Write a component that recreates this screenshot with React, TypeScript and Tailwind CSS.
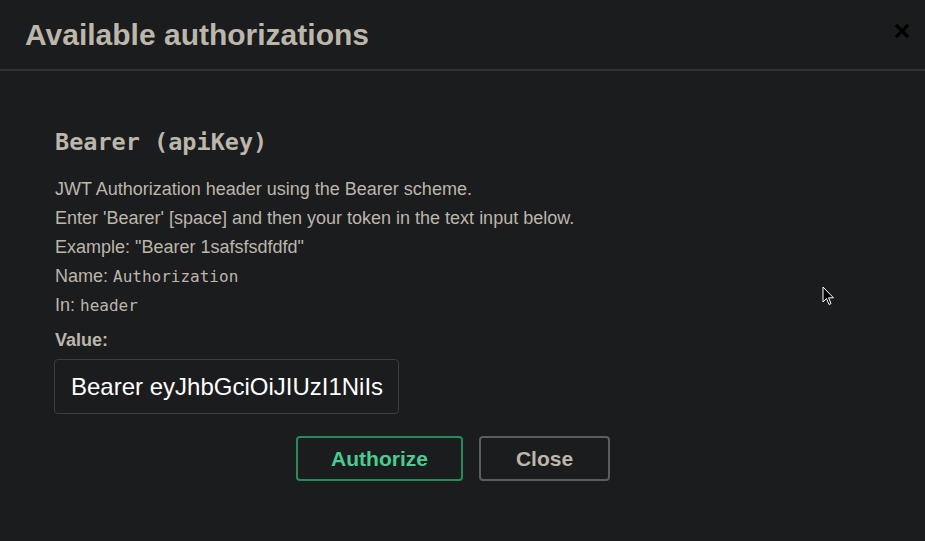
const descLines = [
  "JWT Authorization header using the Bearer scheme.",
  "Enter 'Bearer' [space] and then your token in the text input below.",
  'Example: "Bearer 1safsfsdfdfd"',
];

const App = () => {
  return (
    <div className="relative w-[925px] h-[541px] overflow-hidden bg-[#1b1c1e] font-['Liberation_Sans',Arial,sans-serif]">
      {/** Header */}
      <div className="flex items-center justify-between h-[71px] pl-[25px] pr-[16px] border-b-2 border-[#2f3134]">
        <h3 className="text-[30px] font-bold text-[#bcb6ab] leading-none pt-[1px]">
          Available authorizations
        </h3>
        <button className="w-[14px] h-[14px] mb-[7px]">
          <svg viewBox="0 0 14 14" className="w-[14px] h-[14px]">
            <path d="M2 2 L12 12 M12 2 L2 12" stroke="#000" strokeWidth="3.2" strokeLinecap="square" />
          </svg>
        </button>
      </div>

      {/** Body */}
      <div className="pl-[55px] pr-[74px] pt-[57px]">
        <h4 className="font-['DejaVu_Sans_Mono',monospace] font-bold text-[23.5px] leading-[28px] text-[#bcb6ab]">
          Bearer (apiKey)
        </h4>
        <div className="mt-[23px] text-[18px] text-[#bcb6ab] leading-[21px] flex flex-col gap-[8px]">
          {descLines.map((line) => (
            <p key={line}>{line}</p>
          ))}
          <p>
            Name:{" "}
            <code className="font-['DejaVu_Sans_Mono',monospace] text-[16px]">Authorization</code>
          </p>
          <p>
            In: <code className="font-['DejaVu_Sans_Mono',monospace] text-[16px]">header</code>
          </p>
        </div>
        <label className="block mt-[14px] text-[18px] font-bold text-[#bcb6ab] leading-[21px]">
          Value:
        </label>
        <div className="mt-[8px] ml-[-1px] w-[345px] h-[55px] rounded-[4px] border border-[#3b3d40] bg-[#1b1c1e] flex items-center pl-[16px] overflow-hidden">
          <span className="text-[24px] text-white whitespace-nowrap">Bearer eyJhbGciOiJIUzI1NiIs</span>
        </div>
        {/** Buttons */}
        <div className="mt-[22px] flex justify-center gap-[16px]">
          <button className="w-[167px] h-[45px] rounded-[4px] border-2 border-[#268a5a] text-[#49cc90] text-[21px] font-bold">
            Authorize
          </button>
          <button className="w-[131px] h-[45px] rounded-[4px] border-2 border-[#5b5e61] text-[#bcb6ab] text-[21px] font-bold">
            Close
          </button>
        </div>
      </div>

      {/** Mouse pointer */}
      <svg className="absolute left-[822px] top-[286px]" width="14" height="22" viewBox="0 0 14 22">
        <path d="M1 1 L1 16 L4.5 12.5 L7 18.5 L9 17.5 L6.5 11.8 L11.5 11.8 Z" fill="#000" stroke="#fff" strokeWidth="1" />
      </svg>
    </div>
  );
};

export default App;
